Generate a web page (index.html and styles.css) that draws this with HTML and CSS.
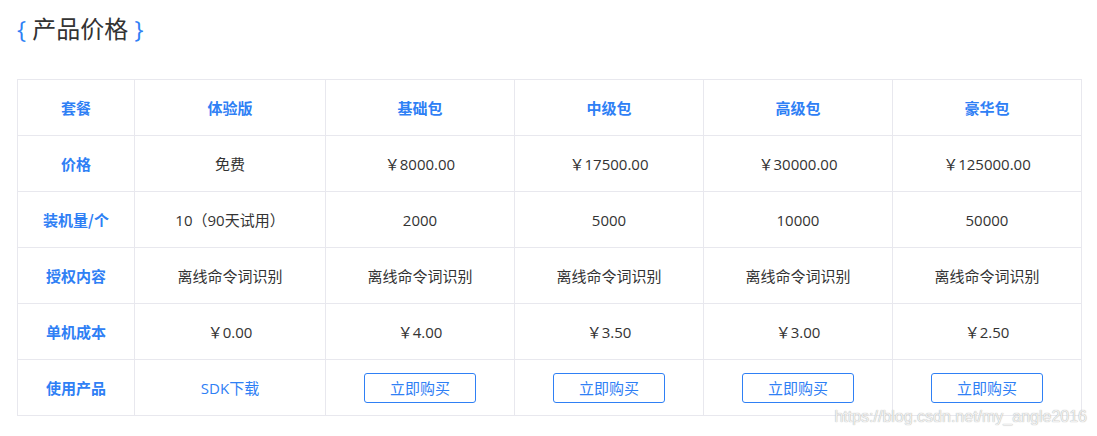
FILE: index.html
```html
<!DOCTYPE html>
<html lang="zh">
<head>
<meta charset="utf-8">
<link rel="stylesheet" href="styles.css">
</head>
<body>
<div class="page">
  <h2 class="title"><span class="brace">{</span> 产品价格 <span class="brace">}</span></h2>
  <table class="price">
    <colgroup>
      <col style="width:117px"><col style="width:191px"><col style="width:189px"><col style="width:189px"><col style="width:189px"><col style="width:189px">
    </colgroup>
    <tr class="head">
      <th>套餐</th><th>体验版</th><th>基础包</th><th>中级包</th><th>高级包</th><th>豪华包</th>
    </tr>
    <tr>
      <th>价格</th><td>免费</td><td>￥8000.00</td><td>￥17500.00</td><td>￥30000.00</td><td>￥125000.00</td>
    </tr>
    <tr>
      <th>装机量/个</th><td>10（90天试用）</td><td>2000</td><td>5000</td><td>10000</td><td>50000</td>
    </tr>
    <tr>
      <th>授权内容</th><td>离线命令词识别</td><td>离线命令词识别</td><td>离线命令词识别</td><td>离线命令词识别</td><td>离线命令词识别</td>
    </tr>
    <tr>
      <th>单机成本</th><td>￥0.00</td><td>￥4.00</td><td>￥3.50</td><td>￥3.00</td><td>￥2.50</td>
    </tr>
    <tr>
      <th>使用产品</th><td><a class="link" href="#">SDK下载</a></td><td><span class="btn">立即购买</span></td><td><span class="btn">立即购买</span></td><td><span class="btn">立即购买</span></td><td><span class="btn">立即购买</span></td>
    </tr>
  </table>
  <div class="watermark">https://blog.csdn.net/my_angle2016</div>
</div>
</body>
</html>
```

FILE: styles.css
```css
html, body {
  margin: 0;
  padding: 0;
  background: #fff;
}
body {
  font-family: "Open Sans", "Noto Sans CJK SC", sans-serif;
  color: #333;
}
.page {
  position: relative;
  width: 1097px;
  height: 436px;
  padding: 12px 0 0 17px;
  box-sizing: border-box;
}
.title {
  margin: 0;
  font-size: 24px;
  font-weight: normal;
  line-height: 34px;
  color: #333;
  height: 67px;
}
.brace {
  color: #2f80f5;
}
.price {
  border-collapse: collapse;
  table-layout: fixed;
  width: 1065px;
  font-size: 15px;
}
.price th, .price td {
  border: 1px solid #e8e8ee;
  height: 55px;
  padding: 0;
  text-align: center;
  vertical-align: middle;
}
.price th {
  color: #2f80f5;
  font-weight: bold;
  font-family: "Noto Sans CJK SC", sans-serif;
}
.price td {
  color: #333;
}
.link {
  color: #2f80f5;
  text-decoration: none;
}
.btn {
  display: inline-block;
  box-sizing: border-box;
  width: 112px;
  height: 30px;
  line-height: 28px;
  border: 1px solid #2f80f5;
  border-radius: 3px;
  color: #2f80f5;
}
.watermark {
  position: absolute;
  right: 10px;
  bottom: 10px;
  font-family: "Liberation Sans", sans-serif;
  font-size: 16px;
  color: #f0f0f0;
  text-shadow: 0 0 1px #999;
}
```
